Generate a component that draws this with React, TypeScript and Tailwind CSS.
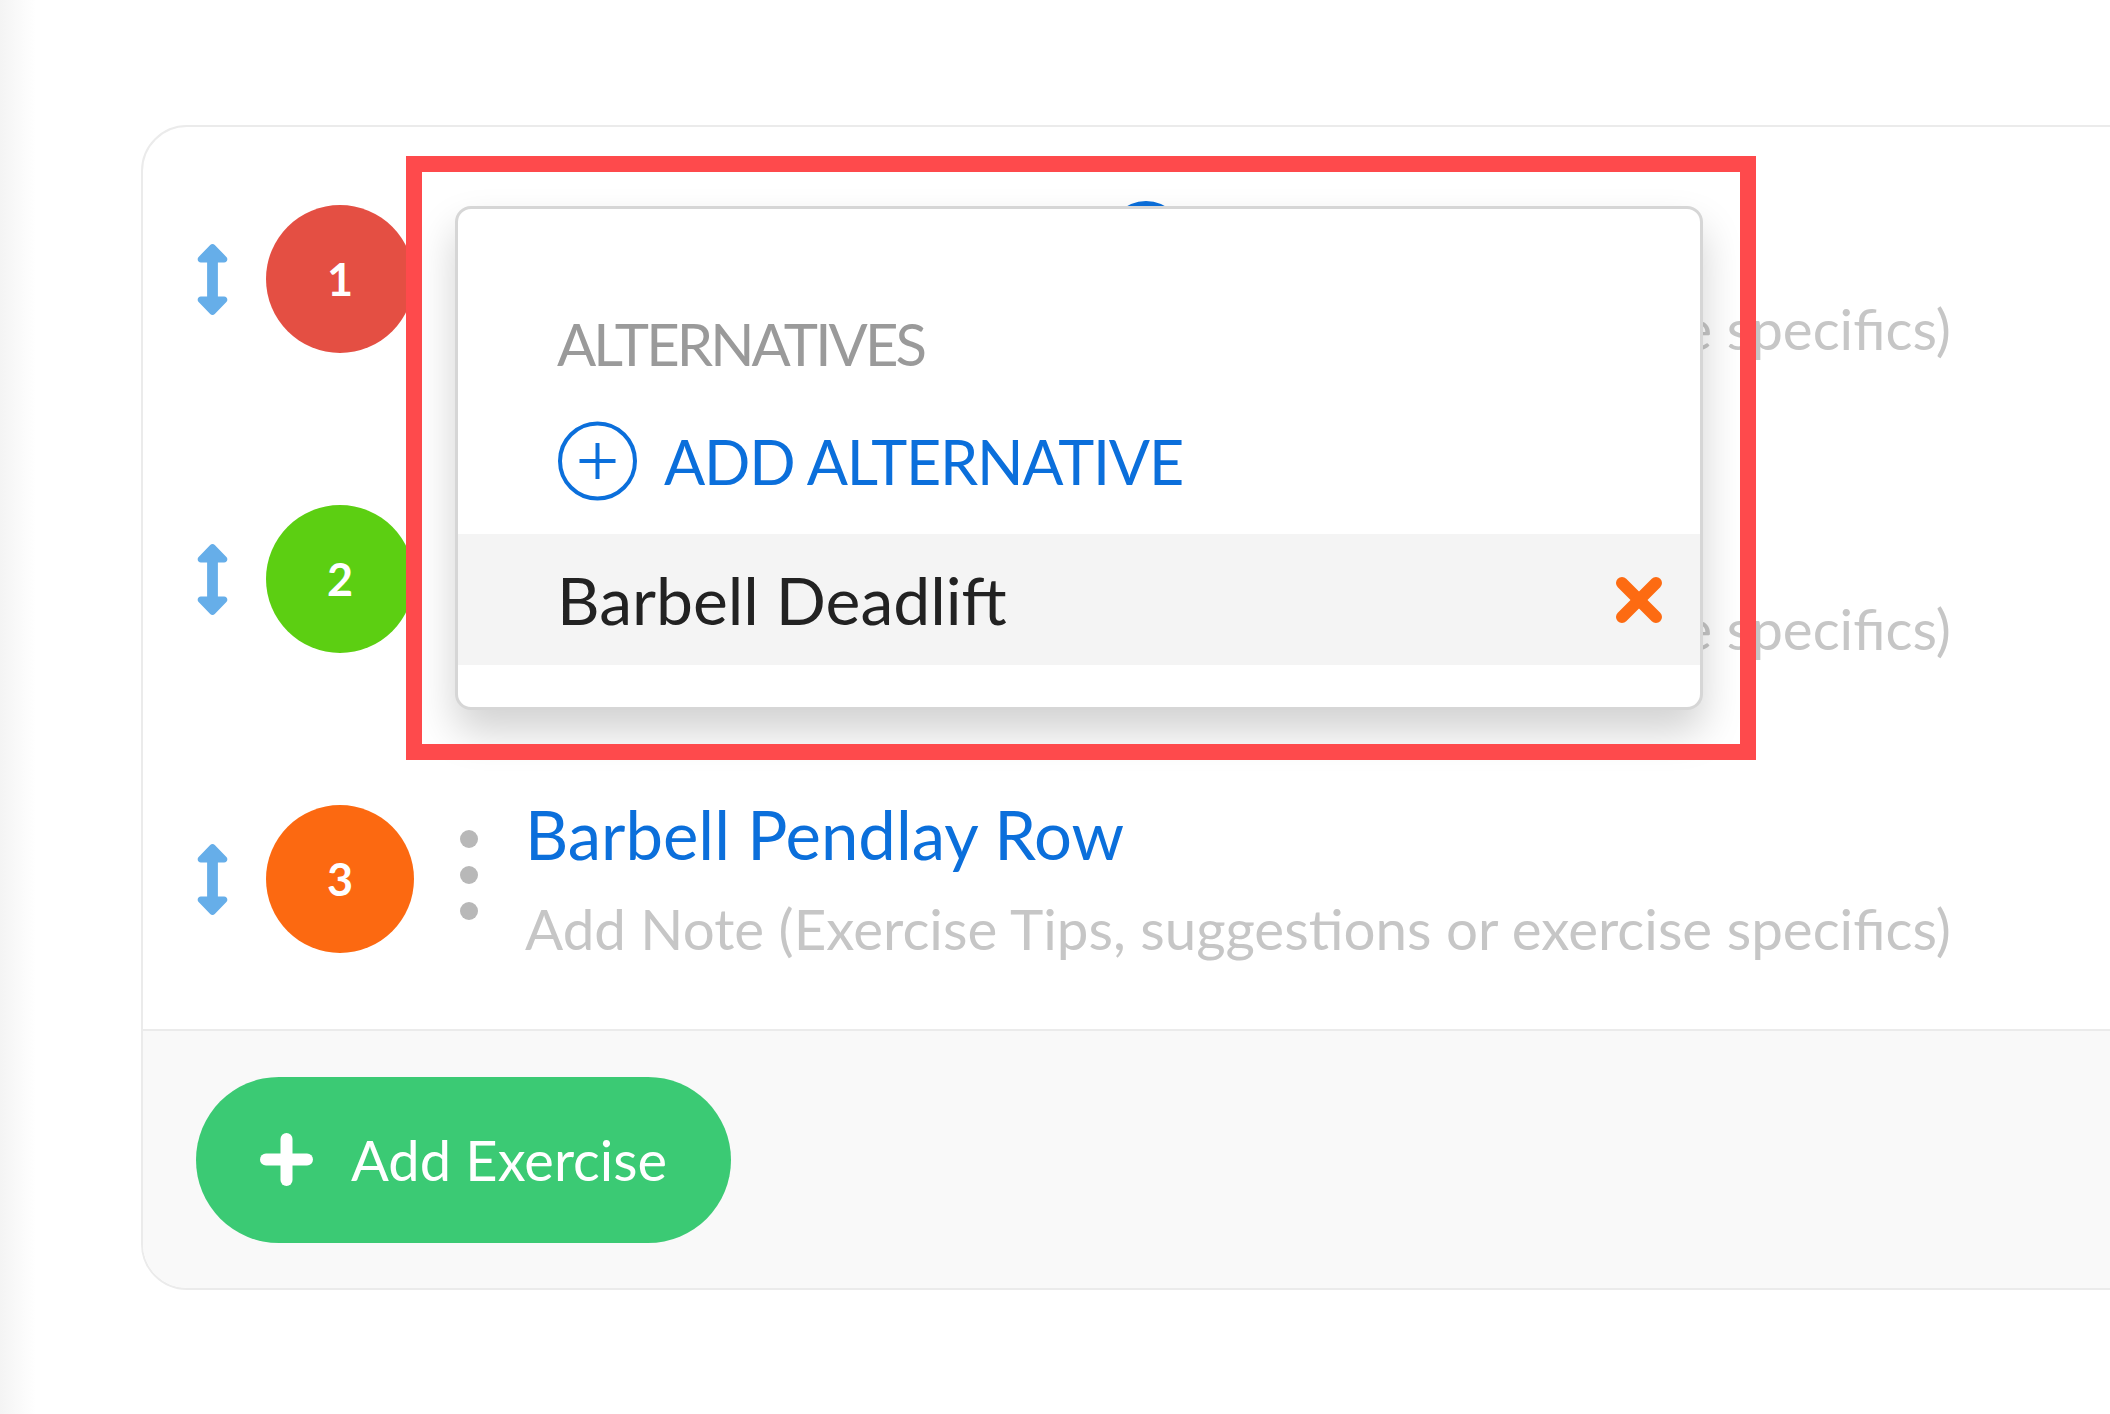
import type { ReactNode } from 'react'

const rows = [
  { n: 1, color: 'bg-[#e44f43]', title: 'Barbell Bench Press', badge: true },
  { n: 2, color: 'bg-[#5ccf12]', title: 'Barbell Back Squat', badge: false },
  { n: 3, color: 'bg-[#fc6911]', title: 'Barbell Pendlay Row', badge: false },
]

function DragIcon() {
  return (
    <svg
      viewBox="13 0 230 512"
      preserveAspectRatio="none"
      className="w-[31px] h-[71px] shrink-0"
      fill="#66aee9"
    >
      <path d="M214.059 377.941H168V134.059h46.059c21.382 0 32.09-25.851 16.971-40.971L144.971 7.029c-9.373-9.373-24.568-9.373-33.941 0L24.971 93.088c-15.119 15.119-4.411 40.971 16.971 40.971H88v243.882H41.941c-21.382 0-32.09 25.851-16.971 40.971l86.059 86.059c9.373 9.373 24.568 9.373 33.941 0l86.059-86.059c15.12-15.119 4.412-40.971-16.97-40.971z" />
    </svg>
  )
}

function Dots() {
  return (
    <div className="ml-[46px] mb-[9px] flex flex-col gap-[18px] shrink-0">
      <div className="w-[18px] h-[18px] rounded-full bg-[#b8b8b8]" />
      <div className="w-[18px] h-[18px] rounded-full bg-[#b8b8b8]" />
      <div className="w-[18px] h-[18px] rounded-full bg-[#b8b8b8]" />
    </div>
  )
}

function ExerciseRow({ n, color, title, badge }: { n: number; color: string; title: string; badge: boolean }) {
  let titleLine: ReactNode = (
    <div className="text-[67px] leading-[67px] text-[#0b6fdb] whitespace-nowrap">{title}</div>
  )
  if (badge) {
    // the round badge next to the title sits under the popup; only its top shows
    titleLine = (
      <div className="flex items-start h-[67px]">
        <div className="w-[582px] text-[67px] leading-[67px] text-[#0b6fdb] whitespace-nowrap">{title}</div>
        <div className="w-[78px] h-[78px] rounded-full bg-[#0b6fdb] shrink-0" />
      </div>
    )
  }
  return (
    <div className="h-[300px] flex items-center pl-[54px]">
      <DragIcon />
      <div
        className={`ml-[38px] w-[148px] h-[148px] rounded-full ${color} flex items-center justify-center text-white font-bold text-[45px] leading-none shrink-0`}
      >
        {n}
      </div>
      <Dots />
      <div className="ml-[47px] flex flex-col">
        {titleLine}
        <div className="mt-[32px] text-[56.5px] leading-[57px] text-[#c6c6c6] whitespace-nowrap">
          Add Note (Exercise Tips, suggestions or exercise specifics)
        </div>
      </div>
    </div>
  )
}

function AlternativesPopup() {
  return (
    <div className="absolute left-[455px] top-[206px] w-[1248px] h-[504px] rounded-[16px] border-[3px] border-[#d6d6d6] bg-white shadow-[0_22px_40px_rgba(0,0,0,0.18)] flex flex-col pt-[106px]">
      <div className="pl-[99px] text-[58px] leading-[58px] text-[#9a9a9a] tracking-[-0.05em]">ALTERNATIVES</div>
      <div className="mt-[48px] pl-[99px] h-[80px] flex items-center">
        <svg viewBox="0 0 81 80" className="w-[81px] h-[80px] shrink-0" fill="none" stroke="#0b6fdb" strokeWidth="4">
          <circle cx="40.5" cy="40" r="37.5" />
          <line x1="22.5" y1="40" x2="58.5" y2="40" />
          <line x1="40.5" y1="22" x2="40.5" y2="58" />
        </svg>
        <span className="ml-[26px] text-[61px] leading-[61px] text-[#0b6fdb] tracking-[-0.02em] whitespace-nowrap">
          ADD ALTERNATIVE
        </span>
      </div>
      <div className="mt-[33px] h-[131px] bg-[#f4f4f4] flex items-center justify-between pl-[99px] pr-[37px]">
        <span className="text-[66px] leading-[66px] text-[#222222]">Barbell Deadlift</span>
        <svg viewBox="0 0 48 48" className="w-[48px] h-[48px]" stroke="#fd6b12" strokeWidth="12" strokeLinecap="round">
          <line x1="7" y1="7" x2="41" y2="41" />
          <line x1="41" y1="7" x2="7" y2="41" />
        </svg>
      </div>
    </div>
  )
}

function App() {
  return (
    <div className="relative w-screen h-screen overflow-hidden bg-white font-['Lato',sans-serif]">
      <div className="absolute left-0 top-0 h-full w-[36px] bg-linear-to-r from-[#f4f4f4] to-white" />
      <div className="pt-[125px] pl-[141px]">
        <div className="w-[2100px] rounded-[46px] border-2 border-[#ebebeb] bg-white overflow-hidden">
          <div className="pt-[2px]">
            {rows.map((r) => (
              <ExerciseRow key={r.n} {...r} />
            ))}
          </div>
          <div className="border-t-2 border-[#ebebeb] bg-[#f9f9f9] h-[259px] flex items-center pl-[53px]">
            <button className="w-[535px] h-[166px] rounded-full bg-[#3bca74] flex items-center pl-[64px] text-white">
              <svg viewBox="0 0 53 53" className="w-[53px] h-[53px] shrink-0" stroke="white" strokeWidth="12" strokeLinecap="round">
                <line x1="26.5" y1="6" x2="26.5" y2="47" />
                <line x1="6" y1="26.5" x2="47" y2="26.5" />
              </svg>
              <span className="ml-[38px] text-[56px] leading-[56px] whitespace-nowrap">Add Exercise</span>
            </button>
          </div>
        </div>
      </div>
      <AlternativesPopup />
      <div className="absolute left-[406px] top-[156px] w-[1350px] h-[604px] border-[16px] border-[#fe4a4c]" />
    </div>
  )
}

export default App
